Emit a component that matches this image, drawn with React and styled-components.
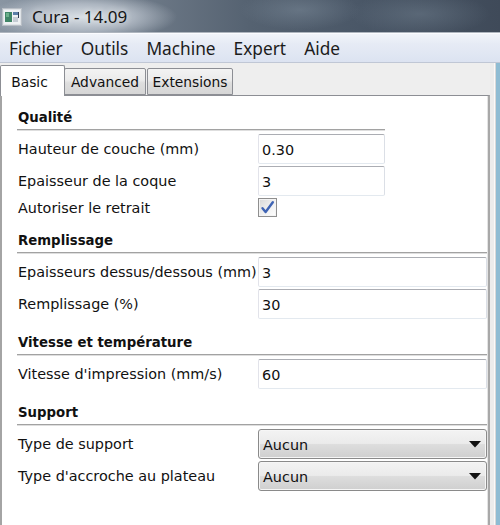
import React from "react";
import styled, { createGlobalStyle } from "styled-components";

const LABEL_FONT = `"DejaVu Sans", "Liberation Sans", sans-serif`;
const UI_FONT = `"Noto Sans", "Open Sans", sans-serif`;

const Global = createGlobalStyle`
  html, body { margin: 0; padding: 0; background: #f0f0f0; }
  #root { width: 500px; height: 525px; overflow: hidden; }
`;

const Window = styled.div`
  width: 500px;
  height: 525px;
  display: flex;
  flex-direction: column;
  overflow: hidden;
  background: #efefef;
`;

const TitleBar = styled.div`
  height: 33px;
  flex: none;
  box-sizing: border-box;
  display: flex;
  align-items: center;
  gap: 10px;
  padding: 1px 0 0 2px;
  border-bottom: 1px solid #aeb5be;
  background:
    radial-gradient(ellipse 95px 24px at 82px 17px, rgba(222, 228, 234, 0.95) 0%, rgba(190, 198, 208, 0.75) 55%, rgba(150, 160, 172, 0) 100%),
    radial-gradient(ellipse 60px 20px at 300px 10px, rgba(120, 135, 150, 0.55), rgba(0, 0, 0, 0) 100%),
    radial-gradient(ellipse 70px 22px at 420px 14px, rgba(110, 125, 140, 0.5), rgba(0, 0, 0, 0) 100%),
    linear-gradient(90deg, #8995a2 0%, #6e7a88 28%, #556271 50%, #4a5767 72%, #3f4a59 100%);
`;

const TitleText = styled.span`
  font-family: ${UI_FONT};
  font-size: 17px;
  color: #151515;
  text-shadow: 0 0 6px rgba(255, 255, 255, 0.8);
`;

const MenuBar = styled.div`
  height: 30px;
  flex: none;
  box-sizing: border-box;
  display: flex;
  align-items: center;
  border-top: 1px solid #fbfcff;
  border-bottom: 1px solid #c0c7d5;
  background: linear-gradient(#f1f4fa 0%, #e6ebf5 35%, #dce3f1 100%);
`;

const MenuItem = styled.span`
  padding: 0 9px;
  font-family: ${UI_FONT};
  font-size: 17.3px;
  color: #1c1c1c;
`;

const Body = styled.div`
  flex: 1;
  display: flex;
  min-height: 0;
`;

const Main = styled.div`
  width: 490px;
  flex: none;
  display: flex;
  flex-direction: column;
`;

const SideStrip = styled.div`
  flex: 1;
  background: linear-gradient(
    90deg,
    #ececec 0,
    #ececec 4px,
    #fafafa 4px,
    #fafafa 5px,
    #d8d8d8 5px,
    #d8d8d8 6px,
    #8fbcd3 6px,
    #8fbcd3 100%
  );
`;

const TabStrip = styled.div`
  height: 32px;
  flex: none;
  display: flex;
  align-items: flex-end;
  background: #eeeeee;
`;

const Tab = styled.div`
  box-sizing: border-box;
  width: ${(p) => p.$w}px;
  margin-left: ${(p) => p.$ml || 0}px;
  height: ${(p) => (p.$active ? 31 : 27)}px;
  margin-bottom: ${(p) => (p.$active ? -1 : 0)}px;
  position: relative;
  z-index: ${(p) => (p.$active ? 1 : 0)};
  display: flex;
  align-items: center;
  justify-content: center;
  padding-right: ${(p) => (p.$active ? 6 : 0)}px;
  padding-top: ${(p) => (p.$active ? 1 : 0)}px;
  font-family: ${LABEL_FONT};
  font-size: 13.8px;
  color: #111;
  border: 1px solid #8c8e94;
  border-bottom: ${(p) => (p.$active ? "none" : "1px solid #8c8e94")};
  border-radius: 2px 2px 0 0;
  background: ${(p) =>
    p.$active ? "#ffffff" : "linear-gradient(#f3f3f3 0%, #ebebeb 45%, #dedede 55%, #d6d6d6 100%)"};
`;

const Panel = styled.div`
  flex: 1;
  background: #ffffff;
  border-top: 1px solid #8c8e94;
  border-left: 2px solid #a4a4a4;
  border-right: 2px solid #a8a8a8;
  box-shadow: inset -1px 0 0 #e4e4e4;
  padding: 0 1px 0 15px;
`;

const Section = styled.div`
  width: ${(p) => (p.$narrow ? "368px" : "auto")};
`;

const Heading = styled.div`
  box-sizing: border-box;
  height: ${(p) => (p.$first ? 34 : 36)}px;
  display: flex;
  align-items: flex-end;
  padding: 0 0 3px 1px;
  font-family: ${LABEL_FONT};
  font-weight: bold;
  font-size: 13.3px;
  line-height: 16px;
  color: #111;
  border-bottom: 1px solid #a2a2a2;
  box-shadow: 0 1px 0 #dedede;
`;

const Rows = styled.div`
  display: flex;
  flex-direction: column;
  gap: 2px;
  padding-top: 4px;
`;

const Row = styled.div`
  display: grid;
  grid-template-columns: 241px 1fr;
  align-items: center;
  height: ${(p) => (p.$short ? 19 : 30)}px;
`;

const Label = styled.span`
  padding-left: 1px;
  font-family: ${LABEL_FONT};
  font-size: 14.4px;
  color: #111;
  white-space: nowrap;
  overflow: visible;
`;

const TextInput = styled.input`
  box-sizing: border-box;
  width: 100%;
  height: 30px;
  margin: 0;
  padding: 1px 3px 0;
  border: 1px solid;
  border-color: #abadb3 #dbdfe6 #e3e9ef #e2e3ea;
  border-radius: 2px;
  background: #fff;
  font-family: ${LABEL_FONT};
  font-size: 14.4px;
  color: #111;
  outline: none;
`;

const SelectBox = styled.div`
  box-sizing: border-box;
  height: 30px;
  display: flex;
  align-items: center;
  justify-content: space-between;
  padding: 1px 5px 0 4px;
  border: 1px solid #8a8a8a;
  border-radius: 3px;
  box-shadow: inset 0 0 0 1px #f6f6f6;
  background: linear-gradient(#f3f3f3 0%, #ebebeb 48%, #dddddd 52%, #cfcfcf 100%);
  font-family: ${LABEL_FONT};
  font-size: 14.4px;
  color: #111;
`;

const CheckBox = styled.div`
  box-sizing: border-box;
  width: 19px;
  height: 19px;
  display: flex;
  align-items: center;
  justify-content: center;
  border: 1px solid #8f8f8f;
  box-shadow: inset 0 0 0 1px #f4f4f4;
  background: linear-gradient(135deg, #d8d8d8 0%, #f2f2f2 60%, #ffffff 100%);
`;

const AppIcon = () => (
  <svg width="20" height="18" viewBox="0 0 20 18">
    <rect x="0.5" y="0.5" width="19" height="17" fill="#dfe3e7" stroke="#b8bec5" />
    <rect x="2" y="2" width="16" height="14" fill="#eef1f3" />
    <rect x="3" y="4" width="7" height="10" fill="#3f8566" />
    <rect x="4" y="5" width="3" height="4" fill="#6bb08a" />
    <rect x="11" y="4" width="5" height="3" fill="#5b7fa8" />
    <rect x="11" y="9" width="5" height="5" fill="#c5ccd4" />
    <rect x="16" y="4" width="1" height="6" fill="#2f3e52" />
  </svg>
);

const Arrow = () => (
  <svg width="12" height="7" viewBox="0 0 12 7">
    <path d="M0 0 H12 L6 6.5 Z" fill="#111" />
  </svg>
);

const Check = () => (
  <svg width="15" height="15" viewBox="0 0 15 15">
    <path
      d="M2.5 8.2 L5.6 12 L12.8 2.2"
      fill="none"
      stroke="#3f64b4"
      strokeWidth="2.4"
      strokeLinecap="round"
      strokeLinejoin="round"
    />
  </svg>
);

const Select = ({ value }) => (
  <SelectBox>
    <span>{value}</span>
    <Arrow />
  </SelectBox>
);

const Field = ({ value }) => <TextInput readOnly value={value} />;

export default function App() {
  return (
    <>
      <Global />
      <Window>
        <TitleBar>
          <AppIcon />
          <TitleText>Cura - 14.09</TitleText>
        </TitleBar>
        <MenuBar>
          <MenuItem>Fichier</MenuItem>
          <MenuItem>Outils</MenuItem>
          <MenuItem>Machine</MenuItem>
          <MenuItem>Expert</MenuItem>
          <MenuItem>Aide</MenuItem>
        </MenuBar>
        <Body>
          <Main>
            <TabStrip>
              <Tab $active $w={65}>Basic</Tab>
              <Tab $w={82} $ml={-1}>Advanced</Tab>
              <Tab $w={86} $ml={1}>Extensions</Tab>
            </TabStrip>
            <Panel>
              <Section $narrow>
                <Heading $first>Qualité</Heading>
                <Rows>
                  <Row>
                    <Label>Hauteur de couche (mm)</Label>
                    <Field value="0.30" />
                  </Row>
                  <Row>
                    <Label>Epaisseur de la coque</Label>
                    <Field value="3" />
                  </Row>
                  <Row $short>
                    <Label>Autoriser le retrait</Label>
                    <CheckBox>
                      <Check />
                    </CheckBox>
                  </Row>
                </Rows>
              </Section>
              <Section>
                <Heading>Remplissage</Heading>
                <Rows>
                  <Row>
                    <Label>Epaisseurs dessus/dessous (mm)</Label>
                    <Field value="3" />
                  </Row>
                  <Row>
                    <Label>Remplissage (%)</Label>
                    <Field value="30" />
                  </Row>
                </Rows>
              </Section>
              <Section>
                <Heading>Vitesse et température</Heading>
                <Rows>
                  <Row>
                    <Label>Vitesse d'impression (mm/s)</Label>
                    <Field value="60" />
                  </Row>
                </Rows>
              </Section>
              <Section>
                <Heading>Support</Heading>
                <Rows>
                  <Row>
                    <Label>Type de support</Label>
                    <Select value="Aucun" />
                  </Row>
                  <Row>
                    <Label>Type d'accroche au plateau</Label>
                    <Select value="Aucun" />
                  </Row>
                </Rows>
              </Section>
            </Panel>
          </Main>
          <SideStrip />
        </Body>
      </Window>
    </>
  );
}
